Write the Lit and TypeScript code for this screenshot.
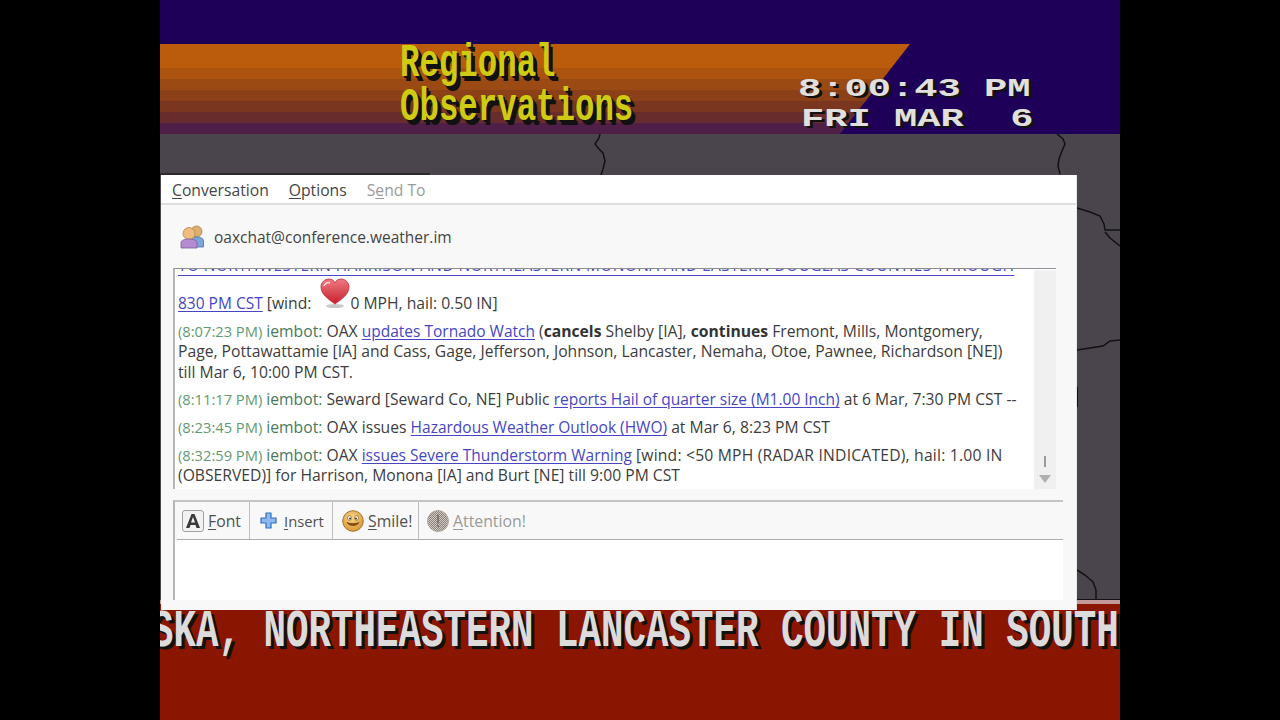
import { LitElement, html, css } from "lit";
import { customElement } from "lit/decorators.js";

@customElement("app-root")
export class AppRoot extends LitElement {
  static styles = css`
    :host { display: block; width: 1280px; height: 720px; background: #000; overflow: hidden; }
    .page { display: flex; justify-content: center; height: 720px; }
    .stage { position: relative; width: 960px; height: 720px; display: flex; flex-direction: column; overflow: hidden; }

    .header { height: 134px; flex: none; background: #1e0058; display: grid; overflow: hidden; }
    .header > * { grid-area: 1 / 1; }
    .band {
      margin-top: 44px;
      clip-path: polygon(0 0, 750px 0, 680px 100%, 0 100%);
      background: linear-gradient(#ba5c0c 0 24px, #ab530f 24px 35px, #9c4a14 35px 46px, #8c4018 46px 57px, #7a361e 57px 68px, #682c2c 68px 79px, #4f1f48 79px 90px);
    }
    .title {
      padding: 43px 0 0 240px;
      font: 700 32.4px/44px "Liberation Mono", monospace;
      color: #cfcb12;
      text-shadow: 2px 1px 0 #111, 4px 3px 0 #111;
    }
    .title div { transform: scaleY(1.42); transform-origin: 0 50%; height: 44px; white-space: pre; }
    .clock {
      padding: 74px 0 0 638px;
      font: 700 26px/30px "Liberation Mono", monospace;
      color: #e2e0dc;
      text-shadow: 2px 2px 0 #111;
      white-space: pre;
    }
    .clock div { transform: scaleX(1.49); transform-origin: 0 50%; height: 30px; }
    .clock div + div { margin-left: 3px; }

    .map { height: 466px; flex: none; background: #4a454d; }
    .map svg { display: block; }
    .ticker {
      flex: 1; background: #8a1500; border-top: 4px solid #c49a98;
      overflow: hidden;
    }
    .ticker div {
      margin: 9px 0 0 -9px;
      font: 700 37.5px/26px "Liberation Mono", monospace;
      color: #dcdcdc;
      text-shadow: 3px 2px 0 #111;
      white-space: pre;
      transform: scaleY(1.45);
      transform-origin: 0 0;
    }

    .win {
      position: absolute; left: 1px; top: 175px; width: 916px; height: 435px;
      display: flex; flex-direction: column;
      background: #f8f8f9;
      font-family: "Open Sans", sans-serif; font-size: 15.7px; color: #3c3c3c;
      border-right: 1px solid #e8e8e8; box-sizing: border-box;
    }
    .menu { height: 27px; padding-top: 1px; flex: none; background: #fff; border-bottom: 2px solid #dfdfdf; display: flex; align-items: center; gap: 20px; padding-left: 11px; color: #454545; }
    .menu .off { color: #9a9a9a; }
    u { text-underline-offset: 2px; }
    .who { height: 63px; padding-top: 1px; flex: none; display: flex; align-items: center; gap: 9px; padding-left: 18px; box-sizing: border-box; color: #444; font-size: 15.5px; }
    .chat {
      flex: none; height: 220px; margin-left: 12px; margin-right: 20px;
      border-top: 1px solid #8f8f98; border-left: 2px solid #b5b5b5;
      display: flex; background: #fff;
    }
    .log { flex: 1; overflow: hidden; padding: 0 3px; line-height: 20.4px; white-space: nowrap; }
    .log .scroll { margin-top: -14px; }
    .log p { margin: 0 0 7.2px; }
    a { color: #4646c4; text-decoration: underline; text-underline-offset: 2px; font-size: 15.5px; line-height: 0; }
    .cut { color: #4a4ac4; letter-spacing: 0.38px; text-underline-offset: 4px; }
    .t { color: #5f9a74; font-size: 14.7px; line-height: 0; }
    .n { color: #467a5c; }
    .wide { letter-spacing: 0.2px; }
    b { color: #333; }
    .heart { vertical-align: 0; margin: 2px -1px 0 8px; }
    .bar { width: 22px; flex: none; background: #f0f0f0; display: flex; flex-direction: column; align-items: center; justify-content: flex-end; padding-bottom: 6px; gap: 8px; box-sizing: border-box; margin-top: 1px; }
    .bar i { display: block; width: 2px; height: 11px; background: #9a9a9a; }
    .bar s { display: block; width: 0; height: 0; border-left: 6px solid transparent; border-right: 6px solid transparent; border-top: 8px solid #b0b0b0; }

    .compose {
      flex: 1; margin: 11px 13px 10px 12px;
      border-left: 2px solid #b5b5b5; border-top: 2px solid #c4c4c4;
      display: flex; flex-direction: column;
    }
    .tools { height: 37px; flex: none; display: flex; margin-left: 2px; border-bottom: 1px solid #aeaeae; font-size: 15.8px; }
    .tool { display: flex; align-items: center; border-right: 1px solid #c0c0c0; box-sizing: border-box; color: #505050; }
    .tool:last-child { border-right: none; color: #9a9a9a; }
    .tool.f { width: 73px; padding-left: 5px; gap: 4px; }
    .tool.i { width: 83px; padding-left: 10px; gap: 7px; font-size: 14.8px; }
    .tool.s { width: 86px; padding-left: 9px; gap: 4px; }
    .tool.a { padding-left: 8px; gap: 4px; }
    .input { flex: 1; background: #fff; }
  `;

  render() {
    return html`
      <div class="page"><div class="stage">
        <div class="header">
          <div class="band"></div>
          <div class="title"><div>Regional</div><div>Observations</div></div>
          <div class="clock"><div>8:00:43 PM</div><div>FRI MAR  6</div></div>
        </div>
        <div class="map">
          <svg width="960" height="466" viewBox="0 0 960 466" fill="none" stroke="#111" stroke-width="1.5">
            <path d="M440 0l-1 4-4 6 4 5 4 4 2 8-2 8-2 6"/>
            <path d="M897 0l6 5 2 5-3 7-3 8-1 7 2 8"/>
            <path d="M917 74l13 4 10 4 4 8 1 6h15"/>
            <path d="M945 98l5 6 10 8"/>
            <path d="M917 216l13-2 13-2 7-5 10-1"/>
            <path d="M917 253v20" stroke-width="2"/>
            <path d="M917 436l8 5 8 7 3 8v10"/>
            <path d="M917 465.500h43" stroke-width="1"/>
            <path d="M0 40h270" stroke-width="1"/>
          </svg>
        </div>
        <div class="ticker"><div>SKA, NORTHEASTERN LANCASTER COUNTY IN SOUTH</div></div>

        <div class="win">
          <div class="menu">
            <span><u>C</u>onversation</span>
            <span><u>O</u>ptions</span>
            <span class="off">S<u>e</u>nd To</span>
          </div>
          <div class="who">
            <svg width="26" height="24" viewBox="0 0 26 24">
              <circle cx="17.500" cy="6.500" r="5.500" fill="#dcae70" stroke="#a88048" stroke-width=".8"/>
              <path d="M12 22v-6c0-3 3-4 6-4s6.500 1 6.500 4v6z" fill="#7aa6d8" stroke="#4a76a8" stroke-width=".8"/>
              <circle cx="10" cy="8.500" r="6" fill="#eebc7c" stroke="#b08a50" stroke-width=".8"/>
              <path d="M2 23v-5c0-3 4-4 8-4s8 1 8 4v5z" fill="#b58ad0" stroke="#7a5a98" stroke-width=".8"/>
            </svg>
            <span>oaxchat@conference.weather.im</span>
          </div>
          <div class="chat">
            <div class="log"><div class="scroll">
              <p><a class="cut">TO NORTHWESTERN HARRISON AND NORTHEASTERN MONONA AND EASTERN DOUGLAS COUNTIES THROUGH</a><br>
              <a>830 PM CST</a> [wind:<svg class="heart" width="32" height="32" viewBox="0 0 32 32">
                <defs><linearGradient id="h" x1="0" y1="0" x2="0" y2="1"><stop offset="0" stop-color="#ee7a80"/><stop offset="1" stop-color="#c8202c"/></linearGradient></defs>
                <ellipse cx="16" cy="29" rx="9" ry="2" fill="#c8c8c8"/>
                <path d="M16 27C9 22 2 17 2 10c0-5 4-8 8-8 3 0 5 1.500 6 4 1-2.500 3-4 6-4 4 0 8 3 8 8 0 7-7 12-14 17z" fill="url(#h)" stroke="#b82c38" stroke-width=".8"/>
                <path d="M5 9c1-3 4-4 6-3" stroke="#fbd4d6" stroke-width="1.500" fill="none"/>
              </svg>0 MPH, hail: 0.50 IN]</p>
              <p><span class="t">(8:07:23 PM)</span> <span class="n">iembot:</span> OAX <a>updates Tornado Watch</a> (<b>cancels</b> Shelby [IA], <b>continues</b> Fremont, Mills, Montgomery,<br>Page, Pottawattamie [IA] and Cass, Gage, Jefferson, Johnson, Lancaster, Nemaha, Otoe, Pawnee, Richardson [NE])<br>till Mar 6, 10:00 PM CST.</p>
              <p><span class="t">(8:11:17 PM)</span> <span class="n">iembot:</span> Seward [Seward Co, NE] Public <a>reports Hail of quarter size (M1.00 Inch)</a> at 6 Mar, 7:30 PM CST --</p>
              <p><span class="t">(8:23:45 PM)</span> <span class="n">iembot:</span> OAX issues <a>Hazardous Weather Outlook (HWO)</a> at Mar 6, 8:23 PM CST</p>
              <p><span class="t">(8:32:59 PM)</span> <span class="n">iembot:</span> OAX <a>issues Severe Thunderstorm Warning</a> <span class="wide">[wind: &lt;50 MPH (RADAR INDICATED), hail: 1.00 IN</span><br>(OBSERVED)] for Harrison, Monona [IA] and Burt [NE] till 9:00 PM CST</p>
            </div></div>
            <div class="bar"><i></i><s></s></div>
          </div>
          <div class="compose">
            <div class="tools">
              <div class="tool f">
                <svg width="22" height="22" viewBox="0 0 22 22">
                  <rect x=".5" y=".5" width="21" height="21" rx="2.500" fill="#f2f2f2" stroke="#a0a0a0"/>
                  <path d="M4 18L9.500 4h3L18 18h-3.500l-1-3h-5l-1 3zM9 12.500h4L11 7z" fill="#3a3a3a" fill-rule="evenodd"/>
                </svg>
                <span><u>F</u>ont</span>
              </div>
              <div class="tool i">
                <svg width="17" height="17" viewBox="0 0 17 17">
                  <path d="M6 1h5v5h5v5h-5v5H6v-5H1V6h5z" fill="#8db8ec" stroke="#2f6cc0" stroke-width="1.200" stroke-linejoin="round"/>
                </svg>
                <span><u>I</u>nsert</span>
              </div>
              <div class="tool s">
                <svg width="22" height="22" viewBox="0 0 22 22">
                  <defs><radialGradient id="sm" cx=".45" cy=".35" r=".7"><stop offset="0" stop-color="#f8dc88"/><stop offset="1" stop-color="#d89030"/></radialGradient></defs>
                  <circle cx="11" cy="11" r="10.300" fill="url(#sm)" stroke="#a87830"/>
                  <ellipse cx="7.500" cy="8" rx="2" ry="2.300" fill="#fff" stroke="#805010" stroke-width=".6"/>
                  <ellipse cx="14.500" cy="8" rx="2" ry="2.300" fill="#fff" stroke="#805010" stroke-width=".6"/>
                  <circle cx="8" cy="8.500" r=".9" fill="#402000"/>
                  <circle cx="14" cy="8.500" r=".9" fill="#402000"/>
                  <path d="M5 12.500c2 4 10 4 12 0-3 1.500-9 1.500-12 0z" fill="#8a4a10" stroke="#704010" stroke-width=".7"/>
                </svg>
                <span><u>S</u>mile!</span>
              </div>
              <div class="tool a">
                <svg width="22" height="22" viewBox="0 0 22 22">
                  <defs><pattern id="ht" width="2" height="2" patternUnits="userSpaceOnUse"><rect width="2" height="2" fill="#d0c8c0"/><rect width="1" height="1" fill="#8c847c"/><rect x="1" y="1" width="1" height="1" fill="#8c847c"/></pattern></defs>
                  <circle cx="11" cy="11" r="10.500" fill="url(#ht)" stroke="#b0a8a0"/>
                  <rect x="10" y="4.500" width="2" height="9" fill="#80786f"/>
                  <rect x="10" y="15" width="2" height="2" fill="#80786f"/>
                </svg>
                <span><u>A</u>ttention!</span>
              </div>
            </div>
            <div class="input"></div>
          </div>
        </div>
      </div></div>
    `;
  }
}
